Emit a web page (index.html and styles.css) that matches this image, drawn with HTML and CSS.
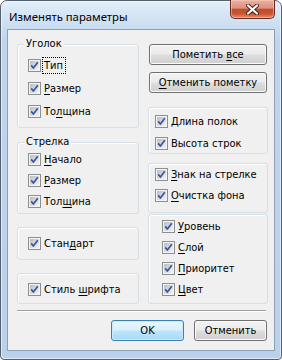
FILE: index.html
```html
<!DOCTYPE html>
<html lang="ru">
<head>
  <meta charset="UTF-8" />
  <title>Изменять параметры</title>
  <link rel="stylesheet" href="styles.css">
</head>
<body>

<svg width="0" height="0" class="defs">
  <defs>
    <linearGradient id="boxfill" x1="0" y1="0" x2="1" y2="1">
      <stop offset="0" stop-color="#b9bec5" />
      <stop offset="1" stop-color="#f3f4f5" />
    </linearGradient>
    <symbol id="chk" viewBox="0 0 13 13">
      <rect x="0.5" y="0.5" width="12" height="12" fill="#f4f4f4" stroke="#8e8f8f" />
      <rect x="2" y="2" width="9" height="9" fill="url(#boxfill)" />
      <path d="M3.2 6.4 L5.4 9 L9.8 3.3" fill="none" stroke="#3b55a0" stroke-width="1.7" stroke-linejoin="round" />
    </symbol>
  </defs>
</svg>

<div class="window">
  <div class="titlebar">
    <span class="title">Изменять параметры</span>
    <div class="close">
      <svg width="13" height="11" viewBox="0 0 13 11">
        <path d="M2 1.5 L11 9.5 M11 1.5 L2 9.5" stroke="#4a1d14" stroke-width="4" stroke-linecap="round" />
        <path d="M2 1.5 L11 9.5 M11 1.5 L2 9.5" stroke="#ffffff" stroke-width="2.2" stroke-linecap="round" />
      </svg>
    </div>
  </div>

  <div class="client">
    <div class="columns">
      <div class="col-left">
        <div class="group g-corner">
          <span class="legend">Уголок</span>
          <label class="row"><svg class="cb"><use href="#chk" /></svg><span class="focus">Тип</span></label>
          <label class="row"><svg class="cb"><use href="#chk" /></svg><span><u>Р</u>азмер</span></label>
          <label class="row"><svg class="cb"><use href="#chk" /></svg><span>То<u>л</u>щина</span></label>
        </div>
        <div class="group g-arrow">
          <span class="legend">Стрелка</span>
          <label class="row"><svg class="cb"><use href="#chk" /></svg><span><u>Н</u>ачало</span></label>
          <label class="row"><svg class="cb"><use href="#chk" /></svg><span><u>Р</u>азмер</span></label>
          <label class="row"><svg class="cb"><use href="#chk" /></svg><span>Тол<u>щ</u>ина</span></label>
        </div>
        <div class="group g-std">
          <label class="row"><svg class="cb"><use href="#chk" /></svg><span>Стан<u>д</u>арт</span></label>
        </div>
        <div class="group g-font">
          <label class="row"><svg class="cb"><use href="#chk" /></svg><span>Стиль <u>ш</u>рифта</span></label>
        </div>
      </div>

      <div class="col-right">
        <button class="btn btn-wide">Пометить <u>в</u>се</button>
        <button class="btn btn-wide btn-second"><u>О</u>тменить пометку</button>
        <div class="group g-len">
          <label class="row"><svg class="cb"><use href="#chk" /></svg><span>Длина полок</span></label>
          <label class="row"><svg class="cb"><use href="#chk" /></svg><span>Высота строк</span></label>
        </div>
        <div class="group g-sign">
          <label class="row"><svg class="cb"><use href="#chk" /></svg><span><u>З</u>нак на стрелке</span></label>
          <label class="row"><svg class="cb"><use href="#chk" /></svg><span><u>О</u>чистка фона</span></label>
        </div>
        <div class="group g-level">
          <label class="row"><svg class="cb"><use href="#chk" /></svg><span><u>У</u>ровень</span></label>
          <label class="row"><svg class="cb"><use href="#chk" /></svg><span><u>С</u>лой</span></label>
          <label class="row"><svg class="cb"><use href="#chk" /></svg><span><u>П</u>риоритет</span></label>
          <label class="row"><svg class="cb"><use href="#chk" /></svg><span><u>Ц</u>вет</span></label>
        </div>
      </div>
    </div>

    <div class="separator"></div>

    <div class="actions">
      <button class="btn btn-ok">OK</button>
      <button class="btn">Отменить</button>
    </div>
  </div>
</div>

</body>
</html>
```

FILE: styles.css
```css
body {
  margin: 0;
  padding: 0;
  background: #ffffff;
  font-family: "DejaVu Sans Condensed", "DejaVu Sans", sans-serif;
  font-stretch: condensed;
  font-size: 11px;
  color: #000;
}

.defs {
  position: absolute;
  width: 0;
  height: 0;
}

.window {
  box-sizing: border-box;
  width: 282px;
  height: 360px;
  border: 1px solid #55606e;
  border-radius: 7px 7px 4px 4px;
  padding: 0 6px 8px 6px;
  background: linear-gradient(180deg, #e3eef9 0px, #cfe1f3 20px, #bdd5ed 40px, #b9d1ea 100%);
  box-shadow: inset 0 0 0 1px rgba(255, 255, 255, 0.55);
  display: flex;
  flex-direction: column;
}

.titlebar {
  height: 28px;
  display: flex;
  align-items: center;
  justify-content: space-between;
  padding-left: 2px;
}

.title {
  font-family: "Noto Sans", sans-serif;
  font-stretch: normal;
  font-size: 11.3px;
  padding-top: 2px;
  color: #000;
}

.close {
  align-self: flex-start;
  margin-top: -1px;
  width: 45px;
  height: 19px;
  box-sizing: border-box;
  border: 1px solid #6b2a1f;
  border-top: none;
  border-radius: 0 0 5px 5px;
  background: linear-gradient(180deg, #eab1a4 0%, #dc917f 45%, #c44a30 52%, #c9532f 75%, #e38e6a 100%);
  box-shadow: inset 0 0 0 1px rgba(255, 210, 190, 0.5);
  display: flex;
  align-items: center;
  justify-content: center;
}

.client {
  flex: 1;
  border: 1px solid #8ca0b6;
  background: #f0f0f0;
  display: flex;
  flex-direction: column;
}

.columns {
  display: flex;
  padding: 14px 0 0 9px;
  gap: 9px;
}

.col-left {
  width: 122px;
  display: flex;
  flex-direction: column;
}

.col-right {
  width: 120px;
  display: flex;
  flex-direction: column;
}

.group {
  position: relative;
  box-sizing: border-box;
  border: 1px solid #d5dfe5;
  border-radius: 3px;
  box-shadow: inset 1px 1px 0 #ffffff;
  display: flex;
  flex-direction: column;
  padding-left: 10px;
}

.legend {
  position: absolute;
  top: -8px;
  left: 6px;
  padding: 0 2px;
  background: #f0f0f0;
  line-height: 14px;
}

.row {
  height: 16px;
  display: flex;
  align-items: center;
  gap: 3px;
  white-space: nowrap;
}

.cb {
  width: 13px;
  height: 13px;
  flex: none;
}

.focus {
  outline: 1px dotted #000;
  outline-offset: 1px;
  padding: 0 1px 0 0;
}

u {
  text-decoration-thickness: 1px;
  text-underline-offset: 2px;
}

/* left column */
.g-corner { height: 84px; padding-top: 12px; gap: 7px; }
.g-arrow  { height: 72px; padding-top: 8px; gap: 5px; margin-top: 14px; }
.g-std    { height: 33px; padding-top: 7px; margin-top: 13px; }
.g-font   { height: 31px; padding-top: 7px; margin-top: 13px; }

/* right column */
.g-len   { height: 47px; padding-top: 5px; gap: 6px; margin-top: 14px; padding-left: 6px; }
.g-sign  { height: 50px; padding-top: 2px; gap: 5px; margin-top: 9px; padding-left: 6px; }
.g-level { height: 90px; padding-top: 3px; gap: 5px; margin-top: 1px; padding-left: 13px; }

.btn {
  box-sizing: border-box;
  height: 21px;
  padding: 0;
  border: 1px solid #707070;
  border-radius: 3px;
  background: linear-gradient(180deg, #f2f2f2 0%, #ebebeb 48%, #dddddd 52%, #cfcfcf 100%);
  box-shadow: inset 0 0 0 1px #fbfbfb;
  font: inherit;
  font-stretch: condensed;
  color: #000;
  width: 73px;
}

.btn-wide {
  width: 118px;
  margin: 0 1px;
}

.btn-second {
  margin-top: 7px;
}

.btn-ok {
  border-color: #3c7fb1;
  background: linear-gradient(180deg, #eaf6fd 0%, #d9f0fc 48%, #bee6fd 52%, #a7d9f5 100%);
  box-shadow: inset 0 0 0 1px #c6ecfc;
}

.separator {
  margin: 6px 0 0 9px;
  width: 249px;
  height: 1px;
  background: #a0a0a0;
  border-bottom: 1px solid #ffffff;
}

.actions {
  display: flex;
  justify-content: flex-end;
  gap: 10px;
  margin-top: 8px;
  padding-right: 7px;
}
```
